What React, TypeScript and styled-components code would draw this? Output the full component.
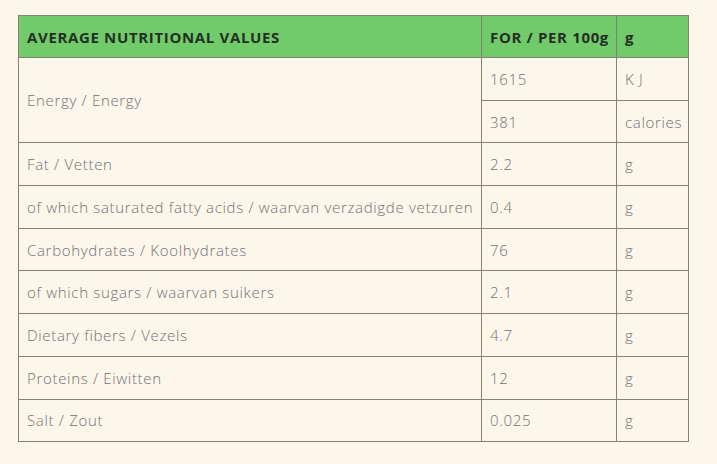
import React from "react";
import styled, { createGlobalStyle } from "styled-components";

type Row = {
    label: string;
    value: string;
    unit: string;
};

const rows: Row[] = [
    {label: "Fat / Vetten", value: "2.2", unit: "g"},
    {label: "of which saturated fatty acids / waarvan verzadigde vetzuren", value: "0.4", unit: "g"},
    {label: "Carbohydrates / Koolhydrates", value: "76", unit: "g"},
    {label: "of which sugars / waarvan suikers", value: "2.1", unit: "g"},
    {label: "Dietary fibers / Vezels", value: "4.7", unit: "g"},
    {label: "Proteins / Eiwitten", value: "12", unit: "g"},
    {label: "Salt / Zout", value: "0.025", unit: "g"},
];

const GlobalStyle = createGlobalStyle`
  html, body {
    margin: 0;
    padding: 0;
    background-color: #fdf6ea;
  }
`;

export default function App() {
    return (
        <Page>
            <GlobalStyle/>
            <Table>
                <colgroup>
                    <col style={{width: 463}}/>
                    <col style={{width: 135}}/>
                    <col style={{width: 72}}/>
                </colgroup>
                <thead>
                <tr>
                    <HeadCell>AVERAGE NUTRITIONAL VALUES</HeadCell>
                    <HeadCell>FOR / PER 100g</HeadCell>
                    <HeadCell>g</HeadCell>
                </tr>
                </thead>
                <tbody>
                <tr>
                    <Cell rowSpan={2}>Energy / Energy</Cell>
                    <Cell>1615</Cell>
                    <Cell>K J</Cell>
                </tr>
                <tr>
                    <Cell>381</Cell>
                    <Cell>calories</Cell>
                </tr>
                {rows.map((r) => (
                    <tr key={r.label}>
                        <Cell>{r.label}</Cell>
                        <Cell>{r.value}</Cell>
                        <Cell>{r.unit}</Cell>
                    </tr>
                ))}
                </tbody>
            </Table>
        </Page>
    );
}

const Page = styled.div`
  padding: 15px 0 0 18px;
  min-height: 100vh;
  box-sizing: border-box;
  background-color: #fdf6ea;
`;
const Table = styled.table`
  width: 670px;
  border-collapse: collapse;
  table-layout: fixed;
  font-family: "Open Sans", sans-serif;
`;
const HeadCell = styled.th`
  height: 42px;
  padding: 0 8px;
  text-align: left;
  background-color: #72cb6b;
  border: 1px solid #8b8070;
  color: #233023;
  font-size: 15px;
  font-weight: 700;
  letter-spacing: 0.65px;
  white-space: nowrap;
  box-sizing: border-box;
`;
const Cell = styled.td`
  height: 42.7px;
  padding: 0 8px;
  text-align: left;
  border: 1px solid #8b8070;
  color: #727272;
  font-size: 15px;
  font-weight: 300;
  letter-spacing: 0.68px;
  white-space: nowrap;
  box-sizing: border-box;
`;
